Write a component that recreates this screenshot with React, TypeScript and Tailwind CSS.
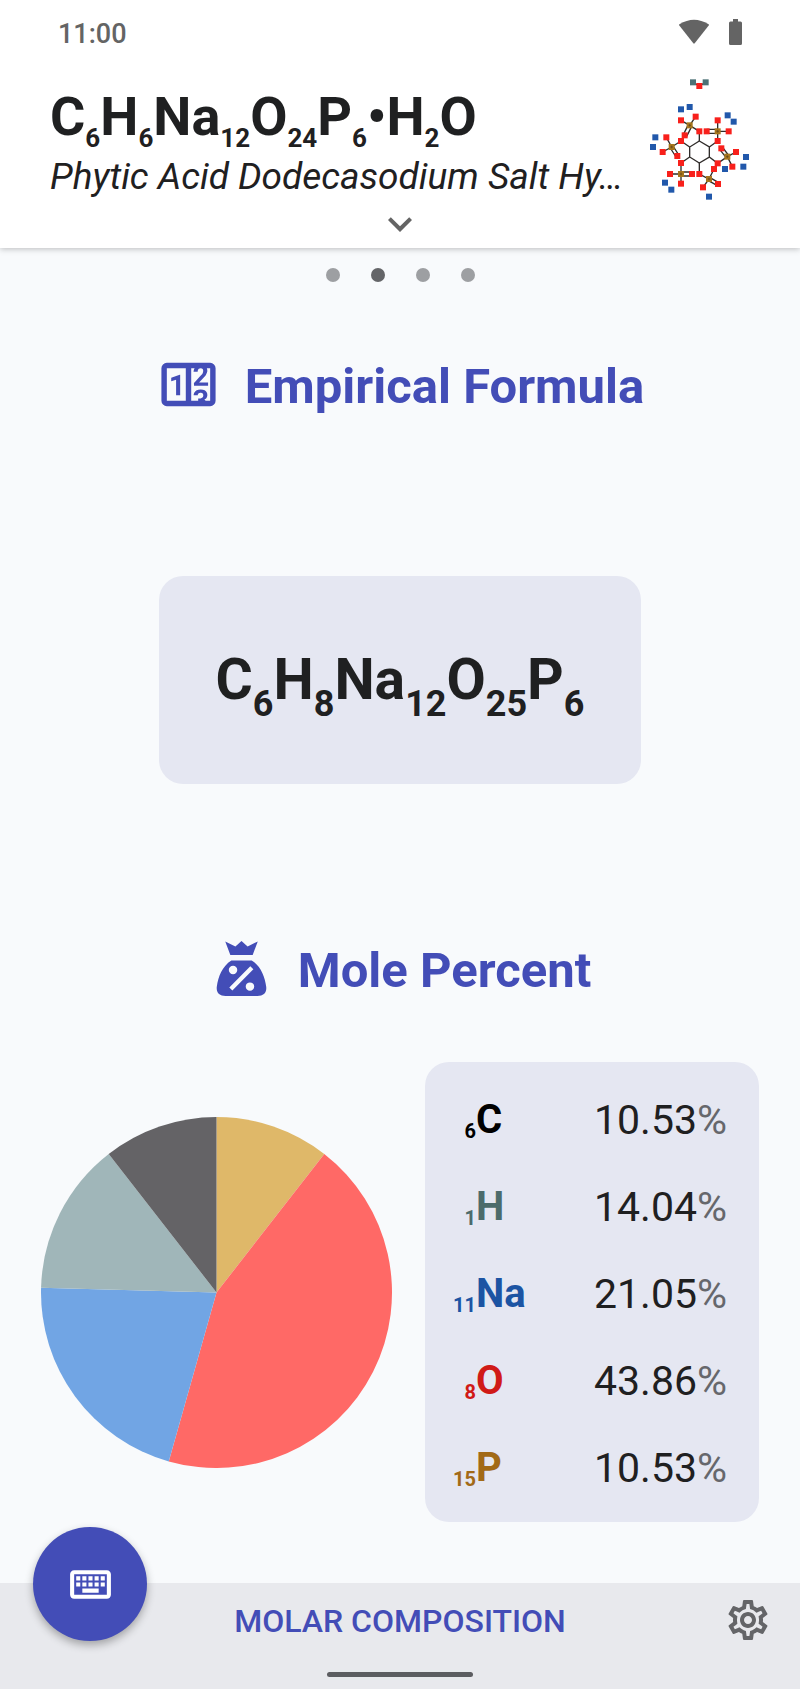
import { MdKeyboardArrowDown, MdOutlineKeyboard, MdOutlineSettings } from "react-icons/md";

type Term = { symbol: string; count?: number };

const compoundFormula: Term[] = [
  { symbol: "C", count: 6 },
  { symbol: "H", count: 6 },
  { symbol: "Na", count: 12 },
  { symbol: "O", count: 24 },
  { symbol: "P", count: 6 },
  { symbol: "•H", count: 2 },
  { symbol: "O" },
];

const empiricalFormula: Term[] = [
  { symbol: "C", count: 6 },
  { symbol: "H", count: 8 },
  { symbol: "Na", count: 12 },
  { symbol: "O", count: 25 },
  { symbol: "P", count: 6 },
];

const elements = [
  { number: 6, symbol: "C", moles: 6, percent: "10.53", text: "text-black", fill: "#646366" },
  { number: 1, symbol: "H", moles: 8, percent: "14.04", text: "text-[#4c6b6b]", fill: "#a0b6b9" },
  { number: 11, symbol: "Na", moles: 12, percent: "21.05", text: "text-[#1c54a3]", fill: "#71a5e4" },
  { number: 8, symbol: "O", moles: 25, percent: "43.86", text: "text-[#d01a17]", fill: "#ff6966" },
  { number: 15, symbol: "P", moles: 6, percent: "10.53", text: "text-[#a26a17]", fill: "#dfb869" },
];

function Formula({ terms, subClass }: { terms: Term[]; subClass: string }) {
  return (
    <>
      {terms.map((t, i) => (
        <span key={i}>
          {t.symbol}
          {t.count !== undefined && <sub className={subClass}>{t.count}</sub>}
        </span>
      ))}
    </>
  );
}

function PieChart() {
  const total = elements.reduce((sum, e) => sum + e.moles, 0);
  const order = [...elements].reverse();
  let start = 0;
  const point = (f: number) => {
    const a = f * 2 * Math.PI;
    return `${(100 * Math.sin(a)).toFixed(3)} ${(-100 * Math.cos(a)).toFixed(3)}`;
  };
  return (
    <svg viewBox="-100 -100 200 200" className="w-full" role="img" aria-label="Mole percent chart">
      {order.map((e) => {
        const end = start + e.moles / total;
        const d = `M0 0L${point(start)}A100 100 0 ${end - start > 0.5 ? 1 : 0} 1 ${point(end)}Z`;
        start = end;
        return <path key={e.symbol} d={d} fill={e.fill} />;
      })}
    </svg>
  );
}

const sodium = [[123, 118], [149, 111], [263, 136], [281, 155], [46, 202], [39, 231], [318, 261], [310, 290], [255, 297], [75, 338], [94, 359], [207, 380]];
const oxygen = [[178, 48], [123, 151], [167, 140], [134, 196], [178, 184], [233, 151], [200, 184], [266, 184], [233, 213], [79, 202], [123, 213], [68, 246], [112, 258], [244, 235], [288, 246], [233, 280], [277, 290], [123, 279], [90, 312], [156, 312], [123, 341], [178, 312], [222, 297], [189, 352], [234, 342]];
const phosphorus = [[149, 166], [233, 184], [95, 231], [262, 260], [123, 312], [207, 327]];

function Molecule() {
  return (
    <svg viewBox="0 0 360 420" className="h-[140px] w-[120px] shrink-0" role="img" aria-label="Molecular structure">
      <g stroke="#302c2a" strokeWidth="4" fill="none">
        <path d="M159 37L178 48L197 37" />
        <path d="M178 213L208 231V261L178 279L149 261V231Z" />
        <path d="M178 213V184L149 166L123 151M149 166L167 140M145 164L130 194M155 169L140 199" />
        <path d="M208 231L233 213V151M233 184H266M233 178H200M233 190H200" />
        <path d="M149 231L123 213L95 231L68 246M95 231L79 202M91 234L108 261M99 228L117 256" />
        <path d="M208 261L233 280L262 260L288 246M262 260L277 290M258 262L239 238M267 258L248 232" />
        <path d="M149 261L123 279V341M123 312H90M123 306H156M123 318H156" />
        <path d="M178 279V312L207 327L222 297M207 327L189 352M205 332L231 346M210 323L236 338" />
      </g>
      {phosphorus.map(([x, y]) => (
        <rect key={`p${x}-${y}`} x={x - 9} y={y - 9} width="18" height="18" fill="#a6761d" />
      ))}
      <g stroke="#5a431c" strokeWidth="2">
        {phosphorus.map(([x, y]) => (
          <path key={`k${x}-${y}`} d={`M${x - 4} ${y}h8M${x} ${y - 4}v8`} />
        ))}
      </g>
      {oxygen.map(([x, y]) => (
        <rect key={`o${x}-${y}`} x={x - 9} y={y - 9} width="18" height="18" fill="#f8201b" />
      ))}
      {sodium.map(([x, y]) => (
        <rect key={`n${x}-${y}`} x={x - 9} y={y - 9} width="18" height="18" fill="#2158ab" />
      ))}
      <rect x="150" y="28" width="18" height="18" fill="#4c7276" />
      <rect x="188" y="28" width="18" height="18" fill="#4c7276" />
    </svg>
  );
}

function CounterIcon() {
  return (
    <svg viewBox="0 0 24 24" className="size-[65px] shrink-0" fill="currentColor" aria-hidden="true">
      <path d="M4,4H20A2,2 0 0,1 22,6V18A2,2 0 0,1 20,20H4A2,2 0 0,1 2,18V6A2,2 0 0,1 4,4M4,6V18H11V6H4M20,18V6H18.76C19,6.54 18.95,7.07 18.95,7.13C18.88,7.8 18.41,8.5 18.24,8.75L15.91,11.3L19.23,11.28L19.24,12.5L14.04,12.47L14,11.47C14,11.47 17.05,8.24 17.2,7.95C17.34,7.67 17.91,6 16.5,6C15.27,6.05 15.41,7.3 15.41,7.3L13.87,7.31C13.87,7.31 13.88,6.65 14.25,6H13V18H15.58L15.57,17.14L16.54,17.13C16.54,17.13 17.45,16.97 17.46,16.08C17.5,15.08 16.65,15.08 16.5,15.08C16.37,15.08 15.43,15.13 15.43,15.95H13.91C13.91,15.95 13.95,13.89 16.5,13.89C19.1,13.89 18.96,15.91 18.96,15.91C18.96,15.91 19,17.16 17.85,17.63L18.37,18H20M8.92,16H7.42V10.2L5.62,10.76V9.53L8.76,8.41H8.92V16Z" />
    </svg>
  );
}

function SackPercentIcon() {
  return (
    <svg viewBox="29 48 192 192" className="size-[65px] shrink-0" fill="currentColor" aria-hidden="true">
      <path d="M77 64L107 79L125 63L143 79L173 64L158 104H92Z" />
      <path
        fillRule="evenodd"
        d="M95 120H155C182 137 194 168 198 198C200 216 190 225 172 225H78C60 225 50 216 52 198C56 168 68 137 95 120ZM100 136A12.500 12.500 0 1 0 100 161A12.500 12.500 0 1 0 100 136ZM150 185A12.500 12.500 0 1 0 150 210A12.500 12.500 0 1 0 150 185ZM151 137L160 146L98 209L89 200Z"
      />
    </svg>
  );
}

function SectionHeading({ icon, children }: { icon: React.ReactNode; children: React.ReactNode }) {
  return (
    <div className="flex h-16 items-center justify-center gap-6 text-[#434db7]">
      {icon}
      <h2 className="pt-1.5 text-[49px] leading-[56px] font-bold">{children}</h2>
    </div>
  );
}

export default function App() {
  return (
    <div className="flex min-h-screen flex-col bg-[#f8fafc] font-[Roboto,sans-serif] text-[#1f2021]">
      <header className="bg-white shadow-[0_1px_6px_rgba(0,0,0,0.25)]">
        <div className="flex h-[70px] items-start justify-between px-[58px] pt-4 text-[#646464]">
          <span className="text-[27px] leading-9 font-medium">11:00</span>
          <div className="flex items-center gap-5 pt-[3px]">
            <svg viewBox="0 0 30 26" className="h-[26px] w-[30px]" fill="currentColor" role="img" aria-label="Wi-Fi">
              <path d="M0.400 5.200Q15 -3.800 29.600 5.200Q30.200 5.800 29.700 6.500L15.700 24.300Q15 25 14.300 24.300L0.300 6.500Q-.2 5.800 0.400 5.200Z" />
            </svg>
            <svg viewBox="0 0 13 26" className="h-[26px] w-[13px]" fill="currentColor" role="img" aria-label="Battery">
              <path d="M4 0H9V2.500H11.500Q13 2.500 13 4V24.500Q13 26 11.500 26H1.500Q0 26 0 24.500V4Q0 2.500 1.500 2.500H4Z" />
            </svg>
          </div>
        </div>
        <div className="flex h-[140px] items-start justify-between pr-10 pl-[50px]">
          <div className="min-w-0 pt-[17px]">
            <h1 className="text-[54px] leading-[60px] font-bold whitespace-nowrap">
              <Formula terms={compoundFormula} subClass="bottom-[-12px] text-[26px]" />
            </h1>
            <p className="pt-[7px] text-[37px] leading-[46px] whitespace-nowrap italic">Phytic Acid Dodecasodium Salt Hy…</p>
          </div>
          <Molecule />
        </div>
        <div className="flex h-[38px] items-start justify-center">
          <button type="button" aria-label="Expand details" className="-mt-2.5 text-[#646464]">
            <MdKeyboardArrowDown className="size-12" />
          </button>
        </div>
      </header>

      <main className="flex flex-1 flex-col">
        <div className="flex justify-center gap-[31px] pt-5">
          {["one", "two", "three", "four"].map((page, i) => (
            <button
              key={page}
              type="button"
              aria-label={`Page ${page}`}
              className={i === 1 ? "size-3.5 rounded-full bg-[#646568]" : "size-3.5 rounded-full bg-[#9d9fa2]"}
            />
          ))}
        </div>

        <section className="pt-[70px]">
          <SectionHeading icon={<CounterIcon />}>Empirical Formula</SectionHeading>
          <div className="flex justify-center pt-40">
            <div className="rounded-3xl bg-[#e5e7f2] px-[57px] py-[67px]">
              <p className="text-[57px] leading-[74px] font-bold whitespace-nowrap">
                <Formula terms={empiricalFormula} subClass="bottom-[-17px] text-4xl" />
              </p>
            </div>
          </div>
        </section>

        <section className="pt-[152px] pb-[61px]">
          <SectionHeading icon={<SackPercentIcon />}>Mole Percent</SectionHeading>
          <div className="grid grid-cols-[351fr_334fr] items-center gap-[33px] px-[41px] pt-[62px]">
            <PieChart />
            <div className="rounded-3xl bg-[#e5e7f2] pt-[14px] pb-[11px]">
              <table className="w-full leading-[48px]">
                <tbody>
                  {elements.map((e) => (
                    <tr key={e.symbol} className="h-[87px]">
                      <th scope="row" className={`p-0 text-left text-[40px] font-bold whitespace-nowrap ${e.text}`}>
                        <sub className="bottom-[-5px] inline-block w-[51px] text-right text-xl leading-none">{e.number}</sub>
                        {e.symbol}
                      </th>
                      <td className="py-0 pr-8 pl-0 text-right text-[41px] whitespace-nowrap">
                        {e.percent}
                        <span className="text-[#66676c]">%</span>
                      </td>
                    </tr>
                  ))}
                </tbody>
              </table>
            </div>
          </div>
        </section>
      </main>

      <footer className="relative bg-[#e8e9ed] pb-3">
        <button
          type="button"
          aria-label="Keyboard"
          className="absolute -top-14 left-[33px] flex size-[114px] items-center justify-center rounded-full bg-[#434db7] text-white shadow-[0_4px_8px_rgba(0,0,0,0.3)]"
        >
          <MdOutlineKeyboard className="size-[49px]" />
        </button>
        <div className="grid h-[89px] grid-cols-[1fr_auto_1fr] items-start px-7">
          <button type="button" className="col-start-2 pt-4 text-[32px] leading-[44px] font-medium text-[#434db7]">
            MOLAR COMPOSITION
          </button>
          <button type="button" aria-label="Settings" className="justify-self-end pt-[13px] text-[#646568]">
            <MdOutlineSettings className="size-12" />
          </button>
        </div>
        <div className="mx-auto h-[5px] w-[146px] rounded-full bg-[#5c5d61]" />
      </footer>
    </div>
  );
}
